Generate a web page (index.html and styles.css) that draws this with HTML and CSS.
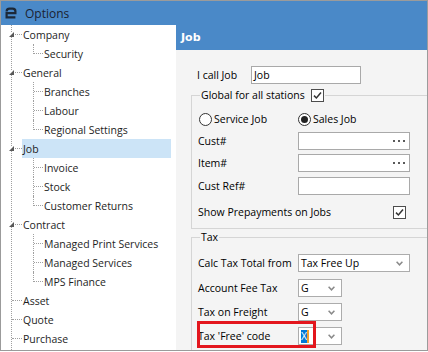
FILE: index.html
```html
<!DOCTYPE html>
<html lang="en">
<head>
    <meta charset="UTF-8">
    <title>Options</title>
    <link rel="stylesheet" href="styles.css">
</head>
<body>
    <div class="window">
        <div class="titlebar">
            <svg class="logo" width="12" height="12" viewBox="0 0 12 12">
                <path d="M1.6 4.4 Q1.6 1.6 4.6 1.6 H7.6 Q10.4 1.6 10.4 4.2 V6.1 H1.6 V10.4 H10.4" fill="none" stroke="#1c2838" stroke-width="2.2"/>
            </svg>
            <span>Options</span>
        </div>
        <div class="main">
            <div class="sidebar">
                <ul class="tree">
                    <li>
                        <div class="row"><span class="tri"><svg width="5" height="5"><polygon points="5,0 5,5 0,5" fill="#595959"/></svg></span><span class="conn"></span><span class="label">Company</span></div>
                        <ul class="kids">
                            <li><div class="row"><span class="conn"></span><span class="label">Security</span></div></li>
                        </ul>
                    </li>
                    <li>
                        <div class="row"><span class="tri"><svg width="5" height="5"><polygon points="5,0 5,5 0,5" fill="#595959"/></svg></span><span class="conn"></span><span class="label">General</span></div>
                        <ul class="kids">
                            <li><div class="row"><span class="conn"></span><span class="label">Branches</span></div></li>
                            <li><div class="row"><span class="conn"></span><span class="label">Labour</span></div></li>
                            <li><div class="row"><span class="conn"></span><span class="label">Regional Settings</span></div></li>
                        </ul>
                    </li>
                    <li>
                        <div class="row selected"><span class="tri"><svg width="5" height="5"><polygon points="5,0 5,5 0,5" fill="#595959"/></svg></span><span class="conn"></span><span class="label">Job</span></div>
                        <ul class="kids">
                            <li><div class="row"><span class="conn"></span><span class="label">Invoice</span></div></li>
                            <li><div class="row"><span class="conn"></span><span class="label">Stock</span></div></li>
                            <li><div class="row"><span class="conn"></span><span class="label">Customer Returns</span></div></li>
                        </ul>
                    </li>
                    <li>
                        <div class="row"><span class="tri"><svg width="5" height="5"><polygon points="5,0 5,5 0,5" fill="#595959"/></svg></span><span class="conn"></span><span class="label">Contract</span></div>
                        <ul class="kids">
                            <li><div class="row"><span class="conn"></span><span class="label">Managed Print Services</span></div></li>
                            <li><div class="row"><span class="conn"></span><span class="label">Managed Services</span></div></li>
                            <li><div class="row"><span class="conn"></span><span class="label">MPS Finance</span></div></li>
                        </ul>
                    </li>
                    <li><div class="row"><span class="conn"></span><span class="label">Asset</span></div></li>
                    <li><div class="row"><span class="conn"></span><span class="label">Quote</span></div></li>
                    <li><div class="row"><span class="conn"></span><span class="label">Purchase</span></div></li>
                </ul>
            </div>

            <div class="pane">
                <div class="pane-head">Job</div>
                <div class="pane-body">
                    <div class="line call">
                        <span class="cap">I call Job</span>
                        <div class="text">Job</div>
                    </div>

                    <div class="group">
                        <div class="legend">
                            <span>Global for all stations</span>
                            <span class="check"><svg width="11" height="11" viewBox="0 0 11 11"><path d="M2 5.6 L4.4 8 L9 2.6" fill="none" stroke="#333" stroke-width="1.5"/></svg></span>
                        </div>
                        <div class="line radios">
                            <label class="opt"><span class="radio"></span>Service Job</label>
                            <label class="opt"><span class="radio on"></span>Sales Job</label>
                        </div>
                        <div class="line field">
                            <span class="cap">Cust#</span>
                            <div class="text wide dots"><svg width="12" height="2"><rect x="0" y="0" width="2" height="2" fill="#5a5a5a"/><rect x="5" y="0" width="2" height="2" fill="#5a5a5a"/><rect x="10" y="0" width="2" height="2" fill="#5a5a5a"/></svg></div>
                        </div>
                        <div class="line field">
                            <span class="cap">Item#</span>
                            <div class="text wide dots"><svg width="12" height="2"><rect x="0" y="0" width="2" height="2" fill="#5a5a5a"/><rect x="5" y="0" width="2" height="2" fill="#5a5a5a"/><rect x="10" y="0" width="2" height="2" fill="#5a5a5a"/></svg></div>
                        </div>
                        <div class="line field gap5">
                            <span class="cap">Cust Ref#</span>
                            <div class="text wide"></div>
                        </div>
                        <div class="line field gap8">
                            <span class="cap long">Show Prepayments on Jobs</span>
                            <span class="check"><svg width="11" height="11" viewBox="0 0 11 11"><path d="M2 5.6 L4.4 8 L9 2.6" fill="none" stroke="#333" stroke-width="1.5"/></svg></span>
                        </div>
                    </div>

                    <div class="group tax">
                        <div class="legend"><span>Tax</span></div>
                        <div class="line field first">
                            <span class="cap">Calc Tax Total from</span>
                            <div class="select">Tax Free Up<svg width="7" height="5" viewBox="0 0 7 5"><path d="M0.6 0.8 L3.5 3.8 L6.4 0.8" fill="none" stroke="#8a8a8a" stroke-width="1.5"/></svg></div>
                        </div>
                        <div class="line field gap7">
                            <span class="cap">Account Fee Tax</span>
                            <div class="select short">G<svg width="7" height="5" viewBox="0 0 7 5"><path d="M0.6 0.8 L3.5 3.8 L6.4 0.8" fill="none" stroke="#8a8a8a" stroke-width="1.5"/></svg></div>
                        </div>
                        <div class="line field gap6">
                            <span class="cap">Tax on Freight</span>
                            <div class="select short">G<svg width="7" height="5" viewBox="0 0 7 5"><path d="M0.6 0.8 L3.5 3.8 L6.4 0.8" fill="none" stroke="#8a8a8a" stroke-width="1.5"/></svg></div>
                        </div>
                        <div class="line field gap6 free">
                            <span class="cap">Tax 'Free' code</span>
                            <div class="select short"><span class="value"><span class="hl">X</span><span class="caret"></span></span><svg width="7" height="5" viewBox="0 0 7 5"><path d="M0.6 0.8 L3.5 3.8 L6.4 0.8" fill="none" stroke="#8a8a8a" stroke-width="1.5"/></svg></div>
                            <div class="mark"></div>
                        </div>
                    </div>
                </div>
            </div>
        </div>
    </div>
</body>
</html>
```

FILE: styles.css
```css
body {
    margin: 0;
    background: #fff;
    font-family: "Open Sans", "Liberation Sans", sans-serif;
    font-size: 10.5px;
    color: #000;
}
.window {
    width: 428px;
    height: 351px;
    box-sizing: border-box;
    border: 1px solid #9b9b9b;
    display: flex;
    flex-direction: column;
}
.titlebar {
    height: 24px;
    flex: none;
    background: #4a89c8;
    display: flex;
    align-items: center;
    gap: 8px;
    padding-left: 4px;
    font-size: 12px;
    color: #1b2230;
}
.logo {
    display: block;
    margin-top: -1px;
}
.main {
    flex: 1;
    display: flex;
    min-height: 0;
}

/* tree */
.sidebar {
    width: 175px;
    flex: none;
    background: #fff;
    overflow: hidden;
}
.tree, .kids {
    list-style: none;
    margin: 0;
    padding: 0;
}
.tree {
    margin: 10px 0 0 10px;
    padding-bottom: 20px;
    border-left: 1px dotted #a0a0a0;
}
.tree > li:first-child {
    margin-top: -10px;
}
.row {
    display: flex;
    align-items: center;
    height: 19px;
}
.tri {
    width: 5px;
    height: 5px;
    flex: none;
    margin-left: -3px;
    background: #fff;
    display: flex;
}
.conn {
    width: 10px;
    height: 9px;
    flex: none;
    align-self: flex-start;
    border-bottom: 1px dotted #a0a0a0;
}
.tri + .conn {
    width: 7px;
    margin-left: 1px;
}
.label {
    flex: 1;
    height: 19px;
    box-sizing: border-box;
    padding: 2px 0 0 1px;
    margin-right: 5px;
    line-height: 17px;
    white-space: nowrap;
    color: #1e1e1e;
}
.selected .label {
    background: #cce4f7;
}
.kids {
    margin-left: 21px;
}
.kids > li {
    border-left: 1px dotted #a0a0a0;
}
.kids > li:last-child {
    border-left-color: transparent;
}
.kids .conn {
    width: 9px;
}
.kids > li:last-child .conn {
    border-left: 1px dotted #a0a0a0;
    margin-left: -1px;
}

/* right pane */
.pane {
    flex: 1;
    background: #f4f4f4;
    overflow: hidden;
}
.pane-head {
    height: 25px;
    background: #4a89c8;
    color: #fff;
    font: bold 11px "DejaVu Sans", sans-serif;
    line-height: 25px;
    padding-left: 5px;
}
.pane-body {
    padding: 16px 0 0 15px;
}
.line {
    display: flex;
    align-items: center;
    height: 18px;
}
.call {
    margin-left: 6px;
}
.call .cap {
    width: 54px;
}
.text {
    width: 110px;
    height: 18px;
    box-sizing: border-box;
    border: 1px solid #a9a9a9;
    background: #fff;
    padding-left: 2px;
    display: flex;
    align-items: center;
}
.text.wide {
    width: 112px;
}
.dots {
    justify-content: flex-end;
    padding-right: 4px;
}
.dots svg {
    display: block;
}
.group {
    border: 1px solid #d5d5d5;
    margin: 11px -20px 0 0;
    padding: 0 0 7px 6px;
}
.group.tax {
    margin-top: 8px;
    padding-bottom: 20px;
}
.legend {
    display: flex;
    align-items: center;
    gap: 6px;
    height: 14px;
    width: max-content;
    margin: -8px 0 0 2px;
    padding: 0 1px;
    background: #f4f4f4;
}
.check {
    width: 13px;
    height: 13px;
    box-sizing: border-box;
    border: 1px solid #4d4d4d;
    background: #fff;
    display: flex;
    align-items: center;
    justify-content: center;
}
.check svg {
    display: block;
}
.radios {
    margin-top: 8px;
    padding-left: 1px;
}
.opt {
    display: flex;
    align-items: center;
    gap: 2px;
    width: 99px;
}
.radio {
    width: 13px;
    height: 13px;
    box-sizing: border-box;
    border: 1px solid #333;
    border-radius: 50%;
    background: #fff;
    display: flex;
    align-items: center;
    justify-content: center;
}
.radio.on::after {
    content: "";
    width: 7px;
    height: 7px;
    border-radius: 50%;
    background: #222;
}
.field {
    margin-top: 4px;
}
.field.gap5 {
    margin-top: 5px;
}
.field.gap6 {
    margin-top: 6px;
}
.field.gap7 {
    margin-top: 7px;
}
.field.gap8 {
    margin-top: 8px;
}
.field.first {
    margin-top: 10px;
}
.cap {
    width: 100px;
    flex: none;
    white-space: nowrap;
}
.cap.long {
    width: 195px;
}
.select {
    width: 112px;
    height: 18px;
    box-sizing: border-box;
    border: 1px solid #acacac;
    background: #fff;
    display: flex;
    align-items: center;
    justify-content: space-between;
    padding: 0 6px 0 2px;
}
.select.short {
    width: 44px;
}
.select svg {
    display: block;
}
.value {
    display: flex;
    align-items: center;
}
.hl {
    background: #0078d7;
    color: #fff;
    line-height: 13px;
}
.caret {
    width: 2px;
    height: 13px;
    background: #f0a030;
}
.free {
    position: relative;
}
.mark {
    position: absolute;
    left: -1px;
    top: -6px;
    width: 119px;
    height: 27px;
    box-sizing: border-box;
    border: 3px solid #e3161d;
}
```
